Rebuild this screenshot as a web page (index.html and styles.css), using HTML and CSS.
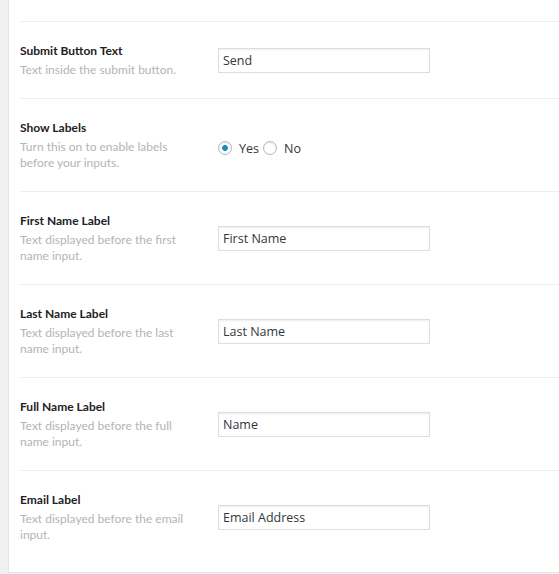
FILE: index.html
```html
<!DOCTYPE html>
<html lang="en">
<head>
    <meta charset="UTF-8">
    <meta name="viewport" content="width=device-width, initial-scale=1.0">
    <title>Form Settings</title>
    <link rel="stylesheet" href="styles.css">
</head>
<body>
    <div class="settings-panel">
        <div class="setting-row setting-tail"></div>

        <div class="setting-row">
            <div class="setting-info">
                <div class="setting-title">Submit Button Text</div>
                <div class="setting-desc">Text inside the submit button.</div>
            </div>
            <div class="setting-field">
                <input type="text" class="text-input" value="Send">
            </div>
        </div>

        <div class="setting-row">
            <div class="setting-info">
                <div class="setting-title">Show Labels</div>
                <div class="setting-desc">Turn this on to enable labels before your inputs.</div>
            </div>
            <div class="setting-field radio-group">
                <label class="radio-option">
                    <input type="radio" name="show_labels" class="radio-input" checked>
                    <span>Yes</span>
                </label>
                <label class="radio-option">
                    <input type="radio" name="show_labels" class="radio-input">
                    <span>No</span>
                </label>
            </div>
        </div>

        <div class="setting-row">
            <div class="setting-info">
                <div class="setting-title">First Name Label</div>
                <div class="setting-desc">Text displayed before the first name input.</div>
            </div>
            <div class="setting-field">
                <input type="text" class="text-input" value="First Name">
            </div>
        </div>

        <div class="setting-row">
            <div class="setting-info">
                <div class="setting-title">Last Name Label</div>
                <div class="setting-desc">Text displayed before the last name input.</div>
            </div>
            <div class="setting-field">
                <input type="text" class="text-input" value="Last Name">
            </div>
        </div>

        <div class="setting-row">
            <div class="setting-info">
                <div class="setting-title">Full Name Label</div>
                <div class="setting-desc">Text displayed before the full name input.</div>
            </div>
            <div class="setting-field">
                <input type="text" class="text-input" value="Name">
            </div>
        </div>

        <div class="setting-row">
            <div class="setting-info">
                <div class="setting-title">Email Label</div>
                <div class="setting-desc">Text displayed before the email input.</div>
            </div>
            <div class="setting-field">
                <input type="text" class="text-input" value="Email Address">
            </div>
        </div>
    </div>
</body>
</html>
```

FILE: styles.css
```css
* {
    margin: 0;
    padding: 0;
    box-sizing: border-box;
}

body {
    background: #f1f1f1;
    font-family: 'Lato', 'Open Sans', sans-serif;
    color: #23282d;
    height: 574px;
    overflow: hidden;
}

.settings-panel {
    margin-left: 8px;
    height: 573px;
    background: #fff;
    border-left: 1px solid #e5e5e5;
    border-bottom: 1px solid #e5e5e5;
    padding-left: 11px;
}

.setting-row {
    display: flex;
    align-items: center;
    padding: 20px 0;
    border-bottom: 1px solid #eee;
}

.setting-row:last-child {
    border-bottom: none;
}

/* end of the row above, scrolled mostly out of view */
.setting-tail {
    height: 22px;
    padding: 0;
}

.setting-info {
    width: 198px;
    flex-shrink: 0;
}

.setting-title {
    font-size: 12px;
    font-weight: 700;
    line-height: 18px;
    color: #1d2125;
}

.setting-desc {
    width: 165px;
    margin-top: 2px;
    font-size: 12px;
    line-height: 16px;
    color: #b4b4b4;
}

.text-input {
    width: 212px;
    height: 25px;
    padding: 0 4px;
    border: 1px solid #ddd;
    box-shadow: inset 0 1px 2px rgba(0, 0, 0, 0.07);
    font-family: 'Open Sans', sans-serif;
    font-size: 12.5px;
    color: #32373c;
    outline: none;
}

.radio-group {
    display: flex;
    gap: 4px;
    padding-top: 6px;
}

.radio-option {
    display: flex;
    align-items: center;
    gap: 7px;
    font-family: 'Open Sans', sans-serif;
    font-size: 12.5px;
    color: #32373c;
}

.radio-input {
    appearance: none;
    -webkit-appearance: none;
    width: 14px;
    height: 14px;
    border: 1px solid #b4b9be;
    border-radius: 50%;
    background: #fff;
    box-shadow: inset 0 1px 2px rgba(0, 0, 0, 0.1);
}

.radio-input:checked {
    background: radial-gradient(circle, #1e8cbe 0, #1e8cbe 2.6px, #fff 3.2px);
}
```
